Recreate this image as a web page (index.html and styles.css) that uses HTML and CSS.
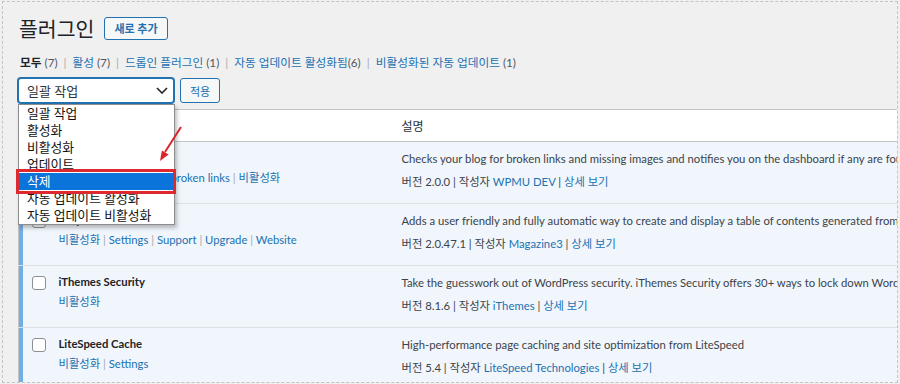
FILE: index.html
```html
<!DOCTYPE html>
<html lang="ko">
<head>
  <meta charset="UTF-8" />
  <meta name="viewport" content="width=device-width, initial-scale=1.0"/>
  <title>플러그인</title>
  <link rel="stylesheet" href="styles.css">
</head>
<body>
  <div class="frame">
    <div class="page-head">
      <h1>플러그인</h1>
      <a class="btn" href="#">새로 추가</a>
    </div>

    <ul class="subsubsub">
      <li><b>모두</b> <span class="count">(7)</span></li>
      <li><a href="#">활성</a> <span class="count">(7)</span></li>
      <li><a href="#">드롭인 플러그인</a> <span class="count">(1)</span></li>
      <li><a href="#">자동 업데이트 활성화됨</a><span class="count">(6)</span></li>
      <li><a href="#">비활성화된 자동 업데이트</a> <span class="count">(1)</span></li>
    </ul>

    <div class="tablenav">
      <div class="bulk">
        <div class="select">
          <span>일괄 작업</span>
          <svg width="12" height="7" viewBox="0 0 12 7"><path d="M1 1 L6 6 L11 1" fill="none" stroke="#1d2327" stroke-width="1.6"/></svg>
        </div>
        <ul class="listbox">
          <li>일괄 작업</li>
          <li>활성화</li>
          <li>비활성화</li>
          <li>업데이트</li>
          <li class="picked">삭제</li>
          <li>자동 업데이트 활성화</li>
          <li>자동 업데이트 비활성화</li>
        </ul>
        <div class="mark"></div>
      </div>
      <a class="btn" href="#">적용</a>
    </div>

    <table class="plugins">
      <thead>
        <tr>
          <td class="check"><span class="box"></span></td>
          <th class="name">플러그인</th>
          <th class="desc">설명</th>
        </tr>
      </thead>
      <tbody>
        <tr>
          <td class="check"><span class="box"></span></td>
          <td class="name">
            <div class="title">Broken Link Checker</div>
            <div class="actions"><a href="#">Settings</a> | <a href="#">Scan site for broken links</a> | <a href="#">비활성화</a></div>
          </td>
          <td class="desc">
            <p>Checks your blog for broken links and missing images and notifies you on the dashboard if any are found.</p>
            <div class="meta">버전 2.0.0 | 작성자 <a href="#">WPMU DEV</a> | <a href="#">상세 보기</a></div>
          </td>
        </tr>
        <tr>
          <td class="check"><span class="box"></span></td>
          <td class="name">
            <div class="title">Easy Table of Contents</div>
            <div class="actions"><a href="#">비활성화</a> | <a href="#">Settings</a> | <a href="#">Support</a> | <a href="#">Upgrade</a> | <a href="#">Website</a></div>
          </td>
          <td class="desc">
            <p>Adds a user friendly and fully automatic way to create and display a table of contents generated from the page content.</p>
            <div class="meta">버전 2.0.47.1 | 작성자 <a href="#">Magazine3</a> | <a href="#">상세 보기</a></div>
          </td>
        </tr>
        <tr>
          <td class="check"><span class="box"></span></td>
          <td class="name">
            <div class="title">iThemes Security</div>
            <div class="actions"><a href="#">비활성화</a></div>
          </td>
          <td class="desc">
            <p>Take the guesswork out of WordPress security. iThemes Security offers 30+ ways to lock down WordPress in an instant.</p>
            <div class="meta">버전 8.1.6 | 작성자 <a href="#">iThemes</a> | <a href="#">상세 보기</a></div>
          </td>
        </tr>
        <tr>
          <td class="check"><span class="box"></span></td>
          <td class="name">
            <div class="title">LiteSpeed Cache</div>
            <div class="actions"><a href="#">비활성화</a> | <a href="#">Settings</a></div>
          </td>
          <td class="desc">
            <p>High-performance page caching and site optimization from LiteSpeed</p>
            <div class="meta">버전 5.4 | 작성자 <a href="#">LiteSpeed Technologies</a> | <a href="#">상세 보기</a></div>
          </td>
        </tr>
      </tbody>
    </table>
  </div>

  <svg class="arrow" width="900" height="384" viewBox="0 0 900 384">
    <line x1="181" y1="127" x2="165" y2="152" stroke="#d9262c" stroke-width="2"/>
    <polygon points="160,161 168.6,154.6 161.9,150.4" fill="#d9262c"/>
  </svg>
</body>
</html>
```

FILE: styles.css
```css
body {
  margin: 0;
  background-color: #f0f0f1;
  font-family: Lato, "Noto Sans CJK KR", sans-serif;
  font-size: 11.3px;
  color: #3c434a;
}
a {
  color: #2271b1;
  text-decoration: none;
}
.frame {
  position: relative;
  box-sizing: border-box;
  margin: 1px 0 0 2px;
  width: 896px;
  height: 382px;
  padding: 12px 0 0 15px;
  border: 1px dashed #c3c4c7;
  overflow: hidden;
}
.page-head {
  display: flex;
  align-items: center;
  height: 28px;
}
.page-head h1 {
  margin: 0 10px 0 1px;
  font-family: "Noto Sans CJK KR", sans-serif;
  font-size: 20.5px;
  font-weight: 400;
  line-height: 28px;
  color: #1d2327;
}
.btn {
  display: inline-flex;
  align-items: center;
  box-sizing: border-box;
  height: 23px;
  padding: 0 9px;
  border: 1px solid #2271b1;
  border-radius: 3px;
  background-color: #f6f7f7;
  font-size: 11px;
  font-weight: 700;
}
.subsubsub {
  display: flex;
  margin: 11px 0 0 2px;
  padding: 0;
  list-style: none;
  line-height: 18px;
  font-size: 11.7px;
}
.subsubsub li + li::before {
  content: "|";
  color: #a7aaad;
  margin: 0 6px;
}
.subsubsub b {
  color: #1d2327;
}
.count {
  color: #50575e;
}
.tablenav {
  display: flex;
  gap: 6px;
  margin-top: 7px;
  height: 25px;
}
.tablenav .btn {
  height: 25px;
  padding: 0 9px;
  font-weight: 400;
}
.bulk {
  position: relative;
  z-index: 2;
}
.select {
  box-sizing: border-box;
  display: flex;
  align-items: center;
  justify-content: space-between;
  width: 156px;
  height: 25px;
  padding: 0 5px 0 8px;
  border: 1px solid #2271b1;
  border-radius: 3px;
  box-shadow: 0 0 0 1px #2271b1;
  background-color: #fff;
  font-size: 13px;
  color: #2c3338;
}
.listbox {
  position: absolute;
  top: 26px;
  left: 0;
  width: 157px;
  margin: 0;
  padding: 0;
  list-style: none;
  box-sizing: border-box;
  border: 1px solid #8d8d8d;
  background-color: #fff;
  box-shadow: 2px 3px 4px rgba(0, 0, 0, 0.25);
  font-size: 12.8px;
  color: #111;
}
.listbox li {
  height: 17px;
  line-height: 17px;
  padding: 0 8px;
  white-space: nowrap;
}
.listbox .picked {
  background-color: #0a74da;
  color: #fff;
}
.mark {
  position: absolute;
  top: 91px;
  left: -2px;
  width: 160px;
  height: 25px;
  box-sizing: border-box;
  border: 3px solid #dc2a30;
}
.plugins {
  width: 900px;
  margin-top: 6px;
  border-collapse: collapse;
  border: 1px solid #c3c4c7;
  background-color: #fff;
  table-layout: fixed;
}
.plugins td,
.plugins th {
  padding: 0;
  vertical-align: top;
  text-align: left;
  font-weight: 400;
}
.plugins thead th,
.plugins thead td {
  height: 31px;
  vertical-align: middle;
  border-bottom: 1px solid #c3c4c7;
  font-size: 12px;
  color: #2c3338;
}
.plugins .check {
  width: 40px;
  padding-left: 13px;
  box-sizing: border-box;
}
.plugins .name {
  width: 333px;
}
.plugins .desc {
  padding-left: 10px;
}
.plugins tbody tr {
  background-color: #f0f6fc;
}
.plugins tbody td {
  height: 61px;
  border-top: 1px solid #dcdfe3;
}
.plugins tbody .check {
  box-shadow: inset 4px 0 0 #72aee6;
  padding-top: 10px;
}
.box {
  display: block;
  box-sizing: border-box;
  width: 14px;
  height: 14px;
  border: 1px solid #8c8f94;
  border-radius: 3px;
  background-color: #fff;
}
.title {
  padding-top: 7px;
  line-height: 18px;
  font-weight: 700;
  color: #1d2327;
}
.actions {
  margin-top: 2px;
  line-height: 18px;
  color: #a7aaad;
}
.desc p {
  margin: 8px 0 0;
  line-height: 18px;
  white-space: nowrap;
}
.meta {
  margin-top: 5px;
  line-height: 18px;
  white-space: nowrap;
}
.arrow {
  position: absolute;
  top: 0;
  left: 0;
  z-index: 5;
  pointer-events: none;
}
```
